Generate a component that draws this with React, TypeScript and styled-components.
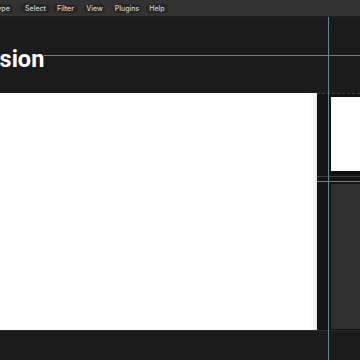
import styled, { createGlobalStyle } from "styled-components";

const Global = createGlobalStyle`
  html, body {
    margin: 0;
    padding: 0;
    background: #1b1b1b;
  }
  * {
    box-sizing: border-box;
  }
`;

const Screen = styled.div`
  position: relative;
  width: 360px;
  height: 360px;
  overflow: hidden;
  display: flex;
  flex-direction: column;
  background: #1b1b1b;
  font-family: Inter, Roboto, "Liberation Sans", sans-serif;
`;

const MenuBar = styled.div`
  height: 17px;
  flex: none;
  display: flex;
  align-items: center;
  background: #323232;
  border-bottom: 1px solid #1f1f1f;
  overflow: hidden;
`;

const MenuRow = styled.div`
  display: flex;
  align-items: center;
  margin-left: -10px;
`;

const MenuPill = styled.button<{ $w: number; $gap: number }>`
  width: ${(p) => p.$w}px;
  margin-left: ${(p) => p.$gap}px;
  height: 9px;
  flex: none;
  border: none;
  border-radius: 5px;
  background: #262626;
  color: #cfcfcf;
  font-family: Inter, Roboto, "Liberation Sans", sans-serif;
  font-size: 7px;
  font-weight: 500;
  line-height: 9px;
  padding: 0;
  text-align: center;
`;

const Header = styled.div`
  height: 76px;
  flex: none;
  display: flex;
  align-items: flex-start;
  padding-top: 28px;
`;

const Title = styled.h1`
  margin: 0 0 0 -22px;
  color: #ffffff;
  font-family: Roboto, "Liberation Sans", sans-serif;
  font-size: 23.5px;
  font-weight: 700;
  line-height: 28px;
  white-space: nowrap;
`;

const Workspace = styled.div`
  height: 237px;
  flex: none;
  display: flex;
`;

const Canvas = styled.div`
  width: 317px;
  flex: none;
  background: #ffffff;
  box-shadow: inset -6px 0 6px -4px rgba(0, 0, 0, 0.12);
`;

const Sidebar = styled.div`
  flex: 1;
  background: #141414;
  display: flex;
  flex-direction: column;
  padding: 3px 0 1px 14px;
  border-top: 1px dashed #3a3a3a;
`;

const Preview = styled.div`
  height: 74px;
  flex: none;
  background: #ffffff;
  box-shadow: 0 2px 3px rgba(0, 0, 0, 0.4);
`;

const Divider = styled.div`
  height: 13px;
  flex: none;
  margin-left: -14px;
  display: flex;
  flex-direction: column;
  padding-top: 5px;
`;

const DividerLine = styled.div`
  height: 1px;
  background: #3c3c3c;
`;

const Panel = styled.div`
  flex: 1;
  background: #303030;
`;

const Footer = styled.div`
  flex: 1;
  background: #1b1b1b;
  border-top: 1px solid #2a2a2a;
`;

const GuideV = styled.div<{ $x: number; $top: number }>`
  position: absolute;
  left: ${(p) => p.$x}px;
  top: ${(p) => p.$top}px;
  bottom: 0;
  width: 1px;
  background: #4e8e8e;
  pointer-events: none;
`;

const GuideH = styled.div<{ $y: number; $left: number }>`
  position: absolute;
  top: ${(p) => p.$y}px;
  left: ${(p) => p.$left}px;
  right: 0;
  height: 1px;
  background: #4e8e8e;
  pointer-events: none;
`;

const menu = [
  { label: "Type", w: 23, gap: 0 },
  { label: "Select", w: 29, gap: 8 },
  { label: "Filter", w: 25, gap: 3 },
  { label: "View", w: 21, gap: 6 },
  { label: "Plugins", w: 28, gap: 8 },
  { label: "Help", w: 22, gap: 5 },
];

export default function App() {
  return (
    <Screen>
      <Global />
      <MenuBar>
        <MenuRow>
          {menu.map((m) => (
            <MenuPill key={m.label} $w={m.w} $gap={m.gap}>
              {m.label}
            </MenuPill>
          ))}
        </MenuRow>
      </MenuBar>
      <Header>
        <Title>Vision</Title>
      </Header>
      <Workspace>
        <Canvas />
        <Sidebar>
          <Preview />
          <Divider>
            <DividerLine />
          </Divider>
          <Panel />
        </Sidebar>
      </Workspace>
      <Footer />
      <GuideV $x={328} $top={17} />
      <GuideH $y={55} $left={44} />
      <GuideH $y={181} $left={317} />
    </Screen>
  );
}
